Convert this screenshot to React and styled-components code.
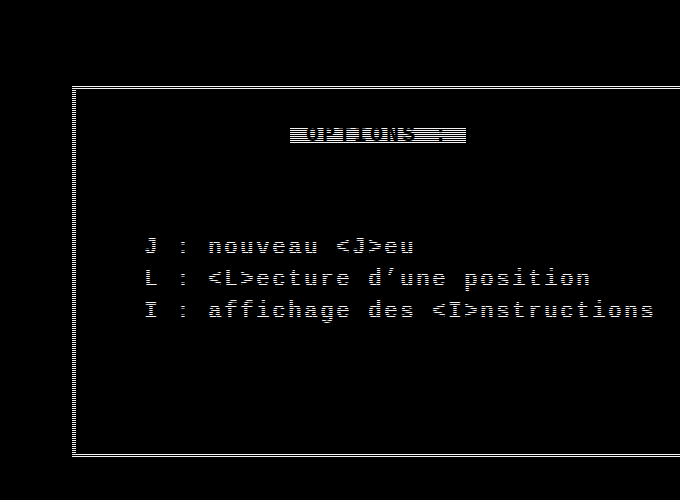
import React from 'react'
import styled, { createGlobalStyle } from 'styled-components'

const GlobalStyle = createGlobalStyle`
  html, body {
    margin: 0;
    padding: 0;
    background: #000;
    overflow: hidden;
  }
  body {
    width: 680px;
    height: 500px;
    font-family: 'Liberation Mono', 'DejaVu Sans Mono', monospace;
  }
`

const Screen = styled.div`
  position: relative;
  width: 680px;
  height: 500px;
  padding-top: 86px;
  padding-left: 72px;
  box-sizing: border-box;
  background: #000;
  color: #f4f2f2;
  overflow: hidden;
`

// horizontal scanlines: every odd pixel row blacked out
const Scanlines = styled.div`
  position: absolute;
  inset: 0;
  pointer-events: none;
  background: repeating-linear-gradient(
    to bottom,
    transparent 0px,
    transparent 1px,
    #000 1px,
    #000 2px
  );
`

const Frame = styled.div`
  width: 700px;
  height: 371px;
  box-sizing: border-box;
  border-top: 3px double #f4f2f2;
  border-bottom: 3px double #f4f2f2;
  border-left: 4px solid #f4f2f2;
`

const Title = styled.div`
  display: inline-block;
  margin-top: 39px;
  margin-left: 214px;
  height: 15px;
  line-height: 15px;
  background: #f4f2f2;
  color: #000;
  font-size: 22px;
  font-weight: bold;
  letter-spacing: 2.8px;
  white-space: pre;
  vertical-align: top;
`

const Menu = styled.div`
  margin-top: 89px;
  padding-left: 68px;
`

const Row = styled.div`
  height: 32px;
  line-height: 32px;
  font-size: 23px;
  font-weight: bold;
  letter-spacing: 2.2px;
  white-space: pre;
`

const options = [
  'J : nouveau <J>eu',
  'L : <L>ecture d\u2019une position',
  'I : affichage des <I>nstructions',
]

export default function App() {
  return (
    <>
      <GlobalStyle />
      <Screen>
        <Frame>
          <Title>{' OPTIONS : '}</Title>
          <Menu>
            {options.map(o => <Row key={o}>{o}</Row>)}
          </Menu>
        </Frame>
        <Scanlines />
      </Screen>
    </>
  )
}
